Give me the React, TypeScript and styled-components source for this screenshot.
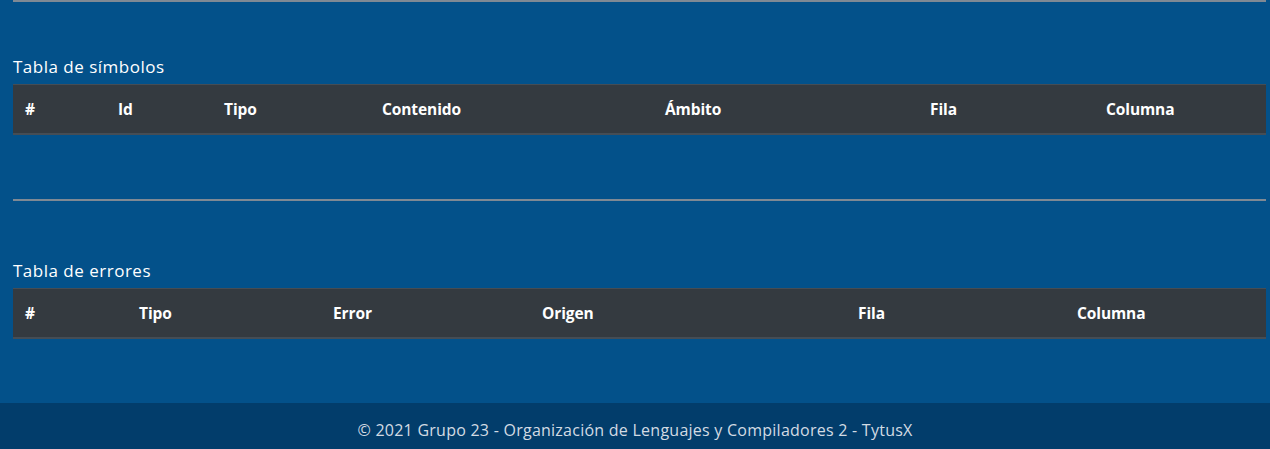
import React from 'react';
import styled, { createGlobalStyle } from 'styled-components';

const GlobalStyle = createGlobalStyle`
    html, body {
        margin: 0;
        padding: 0;
        background: #03518a;
        font-family: "Open Sans", "DejaVu Sans", sans-serif;
        color: #ffffff;
    }
`;

const Page = styled.div`
    display: flex;
    flex-direction: column;
    min-height: 449px;
`;

const Main = styled.main`
    flex: 1;
    padding: 0 4px 64px 13px;
`;

const Rule = styled.hr<{ gap?: number }>`
    margin: ${(p) => p.gap ?? 0}px 0 0 0;
    border: 0;
    border-top: 2px solid #7f8994;
    height: 0;
`;

const Section = styled.section<{ top: number }>`
    padding-top: ${(p) => p.top}px;
`;

const Title = styled.h5`
    margin: 0 0 5px 0;
    padding-top: 2px;
    font-size: 17px;
    font-weight: 400;
    line-height: 24px;
    letter-spacing: 0.5px;
    color: #ffffff;
`;

const Table = styled.table`
    width: 100%;
    border-collapse: separate;
    border-spacing: 0;
    table-layout: fixed;
`;

// width given as the full cell width; padding is 12px each side
const HeadCell = styled.th<{ w: number }>`
    width: ${(p) => p.w - 24}px;
    background: #343a40;
    border-top: 1px solid #454d55;
    border-bottom: 2px solid #454d55;
    padding: 12px;
    line-height: 24px;
    text-align: left;
    font-size: 15.5px;
    font-weight: 700;
    letter-spacing: -0.1px;
    color: #ffffff;
    white-space: nowrap;
`;

const Footer = styled.footer`
    background: #023d6b;
    height: 46px;
    display: flex;
    align-items: center;
    justify-content: center;
    font-size: 16px;
    letter-spacing: 0.25px;
    color: #d3dbe3;
    padding-top: 7px;
    box-sizing: border-box;
`;

const simbolos: [string, number][] = [
    ['#', 93],
    ['Id', 106],
    ['Tipo', 158],
    ['Contenido', 283],
    ['Ámbito', 265],
    ['Fila', 176],
    ['Columna', 172],
];

const errores: [string, number][] = [
    ['#', 114],
    ['Tipo', 194],
    ['Error', 209],
    ['Origen', 316],
    ['Fila', 219],
    ['Columna', 201],
];

const ReportTable: React.FC<{ title: string; top: number; columns: [string, number][] }> = ({ title, top, columns }) => (
    <Section top={top}>
        <Title>{title}</Title>
        <Table>
            <thead>
                <tr>
                    {columns.map(([name, w]) => (
                        <HeadCell key={name} w={w}>{name}</HeadCell>
                    ))}
                </tr>
            </thead>
            <tbody></tbody>
        </Table>
    </Section>
);

const App: React.FC = () => {
    return (
        <Page>
            <GlobalStyle />
            <Main>
                <Rule />
                <ReportTable title="Tabla de símbolos" top={51} columns={simbolos} />
                <Rule gap={64} />
                <ReportTable title="Tabla de errores" top={56} columns={errores} />
            </Main>
            <Footer>© 2021 Grupo 23 - Organización de Lenguajes y Compiladores 2 - TytusX</Footer>
        </Page>
    );
};

export default App;
